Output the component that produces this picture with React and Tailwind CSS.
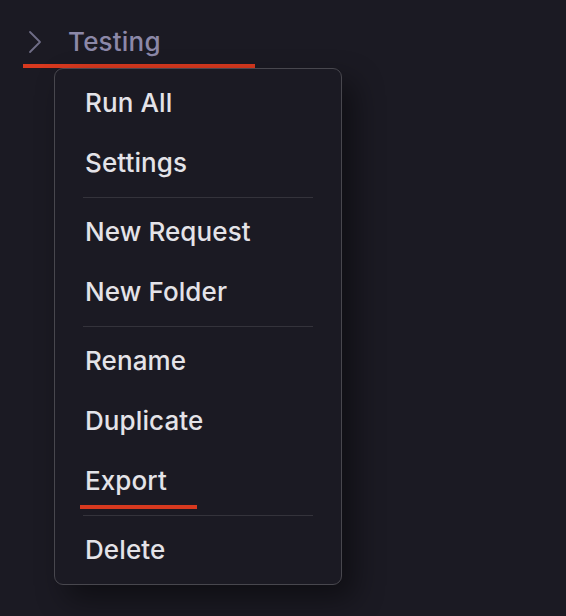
import React from "react";

const Item = ({ children, underline }) => (
  <div className="relative flex h-[60px] items-center pl-[30px] text-[26px] font-[450] leading-none tracking-[0.1px] text-[#e4e3e8]">
    <span>{children}</span>
    {underline && (
      <div className="absolute left-[25px] top-[54px] h-[4px] w-[117px] bg-[#d8391f]" />
    )}
  </div>
);

const Sep = () => <div className="mx-[28px] my-[4px] h-px bg-[#34333b]" />;

export default function App() {
  return (
    <div
      className="relative h-[616px] w-[566px] overflow-hidden bg-[#1b1a23]"
      style={{ fontFamily: "Inter, 'Noto Sans', sans-serif" }}
    >
      <div className="relative ml-[23px] w-[232px] pt-[24px]">
        <div className="flex h-[36px] items-center">
          <svg width="14" height="24" viewBox="0 0 14 24" className="ml-[5px]">
            <path d="M2 2 L12 12 L2 22" fill="none" stroke="#6f6d86" strokeWidth="1.8" strokeLinecap="round" strokeLinejoin="round" />
          </svg>
          <span className="ml-[26px] text-[26px] font-[450] leading-none tracking-[0.2px] text-[#8c88a8]">Testing</span>
        </div>
        <div className="mt-[4px] h-[4px] bg-[#d8391f]" />
      </div>
      <div className="absolute left-[54px] top-[68px] w-[288px] rounded-[9px] border border-[#48474e] bg-[#1b1a23] py-[4px] shadow-[12px_14px_30px_rgba(0,0,0,0.45)]">
        <Item>Run All</Item>
        <Item>Settings</Item>
        <Sep />
        <Item>New Request</Item>
        <Item>New Folder</Item>
        <Sep />
        <Item>Rename</Item>
        <Item>Duplicate</Item>
        <Item underline>Export</Item>
        <Sep />
        <Item>Delete</Item>
      </div>
    </div>
  );
}
